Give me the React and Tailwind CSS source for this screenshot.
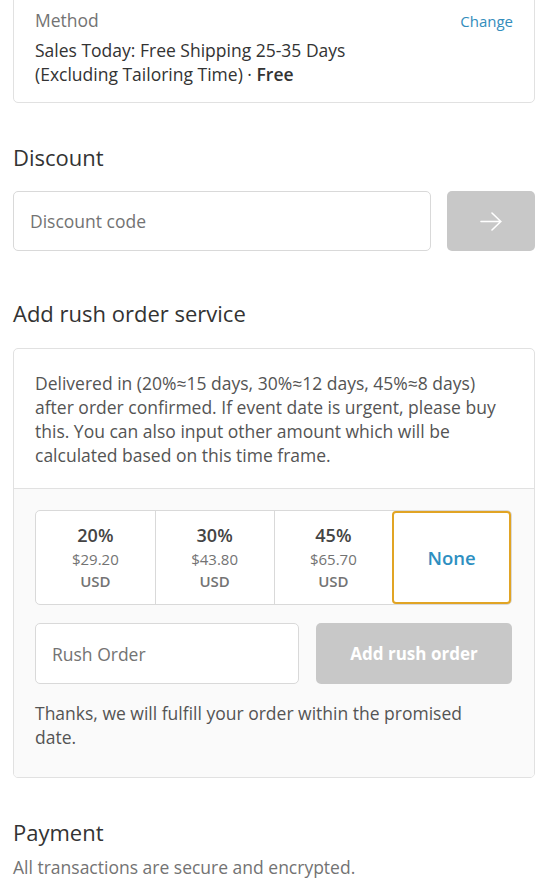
import React, { useState } from 'react';

const OPTIONS = [
  { pct: '20%', price: '$29.20' },
  { pct: '30%', price: '$43.80' },
  { pct: '45%', price: '$65.70' },
];

export default function App() {
  const [selected, setSelected] = useState('none');

  return (
    <div
      className="min-h-screen bg-white pl-[13px] pr-[19px] text-[17.5px] leading-[24px] text-[#545454] overflow-hidden"
      style={{ fontFamily: '"Open Sans", "Noto Sans", sans-serif' }}
    >
      {/* Shipping method card */}
      <div className="-mt-[14px] rounded-[5px] border border-[#e1e1e1] pt-[21px] pb-[16px] pl-[21px] pr-[21px]">
        <div className="flex items-baseline justify-between">
          <span className="text-[#737373]">Method</span>
          <button className="text-[15px] text-[#338dbc]">Change</button>
        </div>
        <p className="mt-[5px] text-[#333]">
          Sales Today: Free Shipping 25-35 Days
          <br />
          (Excluding Tailoring Time) · <span className="font-semibold">Free</span>
        </p>
      </div>

      {/* Discount */}
      <h2 className="mt-[40px] text-[22px] leading-[28px] text-[#333]">Discount</h2>
      <div className="mt-[20px] flex gap-[16px]">
        <input
          className="h-[60px] flex-1 rounded-[5px] border border-[#d9d9d9] px-[16px] text-[17.5px] text-[#333] placeholder:text-[#737373] outline-none"
          placeholder="Discount code"
        />
        <button className="flex h-[60px] w-[88px] items-center justify-center rounded-[5px] bg-[#c8c8c8] text-white">
          <svg width="22" height="19" viewBox="0 0 22 19" fill="none" stroke="currentColor" strokeWidth="1.6" strokeLinecap="round" strokeLinejoin="round">
            <path d="M1 9.5h20M12 1l8.8 8.5L12 18" />
          </svg>
        </button>
      </div>

      {/* Rush order */}
      <h2 className="mt-[48px] text-[22px] leading-[28px] text-[#333]">Add rush order service</h2>
      <div className="mt-[21px] overflow-hidden rounded-[5px] border border-[#e1e1e1]">
        <div className="px-[21px] pt-[22px] pb-[21px]">
          Delivered in (20%≈15 days, 30%≈12 days, 45%≈8 days) after order confirmed. If event date is
          urgent, please buy this. You can also input other amount which will be calculated based on
          this time frame.
        </div>
        <div className="border-t border-[#e1e1e1] bg-[#fafafa] pl-[21px] pr-[22px] pt-[21px] pb-[28px]">
          <div className="grid h-[95px] grid-cols-4 rounded-[5px] border border-[#d9d9d9] bg-white">
            {OPTIONS.map((o, i) => (
              <button
                key={o.pct}
                onClick={() => setSelected(o.pct)}
                className={`flex flex-col items-center justify-center ${i > 0 ? 'border-l border-[#d9d9d9]' : ''}`}
              >
                <span className="text-[18px] leading-[23px] font-semibold text-[#444]">{o.pct}</span>
                <span className="text-[15px] leading-[24px] text-[#737373]">{o.price}</span>
                <span className="text-[15px] leading-[21px] font-semibold text-[#737373]">USD</span>
              </button>
            ))}
            <button
              onClick={() => setSelected('none')}
              className="flex items-center justify-center rounded-[4px] border-2 border-[#e1a424] text-[18.5px] font-semibold text-[#2e8fc1]"
            >
              None
            </button>
          </div>

          <div className="mt-[18px] flex gap-[17px]">
            <input
              className="h-[61px] flex-1 min-w-0 rounded-[5px] border border-[#d9d9d9] bg-white px-[16px] text-[17.5px] text-[#333] placeholder:text-[#737373] outline-none"
              placeholder="Rush Order"
            />
            <button className="h-[61px] w-[196px] rounded-[5px] bg-[#c8c8c8] text-[17px] font-bold text-white">
              Add rush order
            </button>
          </div>

          <p className="mt-[17px]">
            Thanks, we will fulfill your order within the promised
            <br />
            date.
          </p>
        </div>
      </div>

      {/* Payment */}
      <h2 className="mt-[40px] text-[22px] leading-[28px] text-[#333]">Payment</h2>
      <p className="mt-[9px] text-[#737373]">All transactions are secure and encrypted.</p>
    </div>
  );
}
